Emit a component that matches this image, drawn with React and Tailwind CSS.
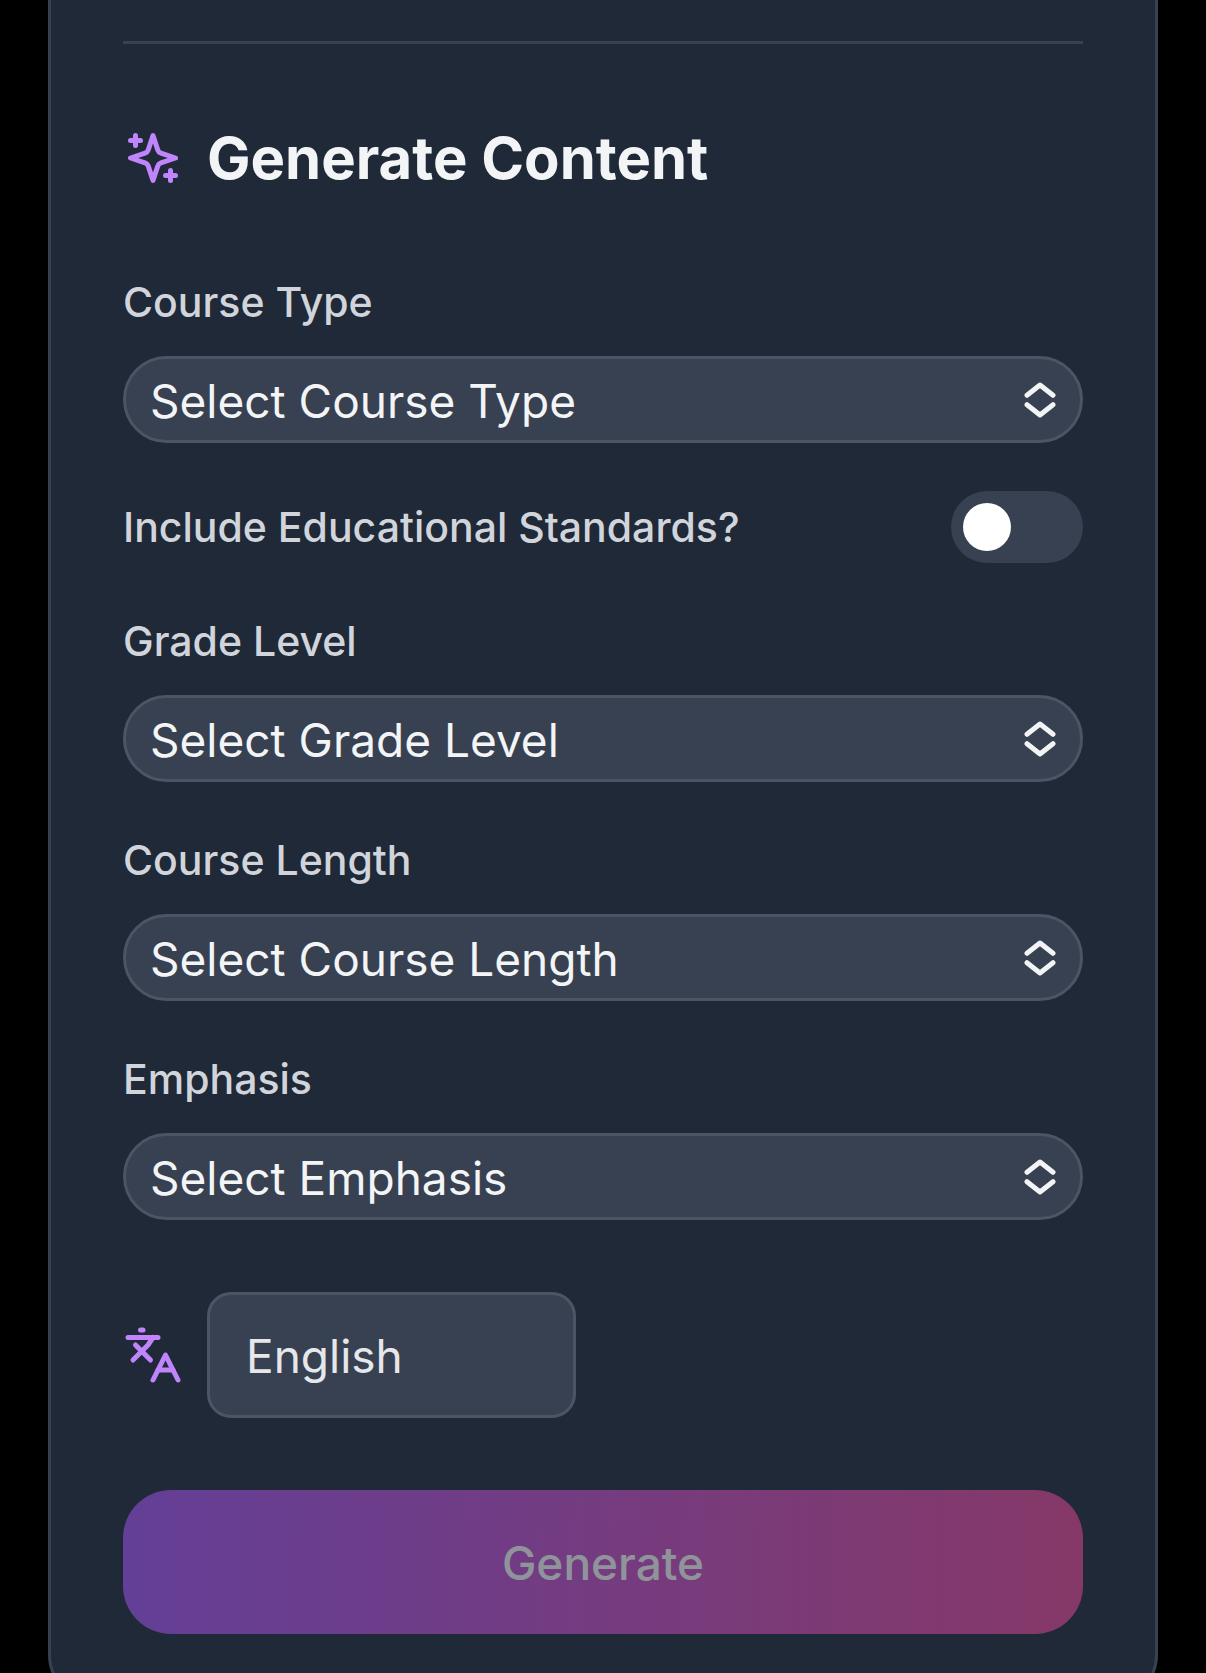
import { Languages } from "lucide-react";

function SparklesIcon() {
  return (
    <svg
      className="size-[60px] shrink-0 text-[#c084fc]"
      viewBox="0 0 24 24"
      fill="none"
      stroke="currentColor"
      strokeWidth="2"
      strokeLinecap="round"
      strokeLinejoin="round"
      aria-hidden="true"
    >
      <path d="m12 3-1.912 5.813a2 2 0 0 1-1.275 1.275L3 12l5.813 1.912a2 2 0 0 1 1.275 1.275L12 21l1.912-5.813a2 2 0 0 1 1.275-1.275L21 12l-5.813-1.912a2 2 0 0 1-1.275-1.275L12 3Z" />
      <path d="M5 3v4" />
      <path d="M19 17v4" />
      <path d="M3 5h4" />
      <path d="M17 19h4" />
    </svg>
  );
}

function UpDownIcon() {
  return (
    <svg
      className="pointer-events-none absolute inset-y-0 right-[27px] my-auto h-9 w-8"
      viewBox="0 0 32 36"
      fill="none"
      stroke="#f3f4f6"
      strokeWidth="5"
      strokeLinecap="round"
      strokeLinejoin="round"
      aria-hidden="true"
    >
      <path d="M3 13.3 16 3l13 10.3" />
      <path d="M3 22.7 16 33l13-10.3" />
    </svg>
  );
}

function SelectField({ id, label, placeholder }) {
  return (
    <div className="flex flex-col gap-6">
      <label htmlFor={id} className="text-[41px] leading-[60px] font-medium text-[#d1d5db]">
        {label}
      </label>
      <div className="relative">
        <select
          id={id}
          className="block h-[87px] w-full appearance-none rounded-full border-3 border-[#4b5563] bg-[#374151] px-6 pt-0.5 text-[46px] leading-[60px] text-[#f3f4f6]"
        >
          <option>{placeholder}</option>
        </select>
        <UpDownIcon />
      </div>
    </div>
  );
}

export default function App() {
  return (
    <div className="h-screen overflow-hidden bg-black px-12 font-[Inter,sans-serif]">
      <main className="rounded-b-[48px] border-3 border-t-0 border-[#374151] bg-[#1f2937] px-[72px] pt-[41px] pb-[66px]">
        <form className="flex flex-col gap-[72px] border-t-3 border-[#374151] pt-[72px]">
          <div className="flex items-center gap-6">
            <SparklesIcon />
            <h2 className="text-[58px] leading-[84px] font-bold text-[#f3f4f6]">Generate Content</h2>
          </div>

          <div className="flex flex-col gap-12">
            <SelectField id="course-type" label="Course Type" placeholder="Select Course Type" />
            <div className="flex items-center justify-between">
              <label htmlFor="standards" className="text-[41px] leading-[60px] font-medium text-[#d1d5db]">
                Include Educational Standards?
              </label>
              <input
                id="standards"
                type="checkbox"
                role="switch"
                className="h-[72px] w-[132px] shrink-0 appearance-none rounded-full bg-[#374151] p-3 before:block before:size-12 before:rounded-full before:bg-white checked:bg-[#a855f7] checked:before:ml-auto"
              />
            </div>
            <SelectField id="grade-level" label="Grade Level" placeholder="Select Grade Level" />
            <SelectField id="course-length" label="Course Length" placeholder="Select Course Length" />
            <SelectField id="emphasis" label="Emphasis" placeholder="Select Emphasis" />
          </div>

          <div className="flex items-center gap-6">
            <Languages className="size-[60px] shrink-0 text-[#c084fc]" aria-hidden="true" />
            <select
              aria-label="Language"
              className="h-[126px] w-[369px] appearance-none rounded-3xl border-3 border-[#4b5563] bg-[#374151] px-9 pt-0.5 text-[46px] leading-[72px] text-[#e5e7eb]"
            >
              <option>English</option>
            </select>
          </div>

          <button
            type="button"
            disabled
            className="h-36 w-full rounded-[48px] bg-linear-to-r/srgb from-[#a855f7] to-[#ec4899] pt-0.5 text-[46px] leading-[72px] font-medium text-white opacity-50"
          >
            Generate
          </button>
        </form>
      </main>
    </div>
  );
}
